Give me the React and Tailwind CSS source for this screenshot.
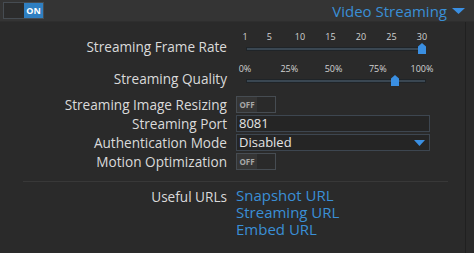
import React from "react";

const frameTicks = [1, 5, 10, 15, 20, 25, 30].map((v) => ({ label: String(v), pos: (v - 1) / 29 }));
const qualityTicks = ["0%", "25%", "50%", "75%", "100%"].map((l, i) => ({ label: l, pos: i / 4 }));

const Slider = ({ ticks, value }) => (
  <div className="w-[200px]">
    <div className="relative h-[12px] text-[9px] leading-[12px] text-[#d2d2d2]">
      {ticks.map((t) => (
        <span key={t.label} className="absolute top-0 -translate-x-1/2 whitespace-nowrap" style={{ left: 9 + t.pos * 177 }}>
          {t.label}
        </span>
      ))}
    </div>
    <div className="relative h-[12px]">
      <div className="absolute left-[10px] top-[4px] h-[4px] w-[180px] border border-[#1f2428] bg-[#3a4752]" />
      <svg className="absolute top-0" style={{ left: 9 + value * 177 - 4 }} width="8" height="11" viewBox="0 0 8 11">
        <path d="M0 3.5 L4 0 L8 3.5 V11 H0 Z" fill="#3a8fe2" />
      </svg>
    </div>
  </div>
);

const Toggle = ({ on }) =>
  on ? (
    <div className="flex h-[17px] w-[41px] border border-[#464c52]">
      <div className="w-[20px] bg-[#2c2c2c]" />
      <div className="flex flex-1 items-center justify-center bg-[#2f7fc1] text-[9px] font-bold text-white">ON</div>
    </div>
  ) : (
    <div className="flex h-[17px] w-[40px] border border-[#464c52]">
      <div className="flex w-[20px] items-center justify-center bg-[#353535] text-[8px] font-bold text-[#a8a8a8]">OFF</div>
      <div className="flex-1 bg-[#2a2a2a]" />
    </div>
  );

const Row = ({ label, children, className = "" }) => (
  <div className={`flex ${className}`}>
    <div className="w-[228px] shrink-0 pr-[1px] text-right text-[13.6px] leading-[17px] text-[#dadada]">{label}</div>
    <div className="ml-[8px]">{children}</div>
  </div>
);

const Triangle = ({ w, h, className = "" }) => (
  <svg className={className} width={w} height={h} viewBox={`0 0 ${w} ${h}`}>
    <path d={`M0 0 H${w} L${w / 2} ${h} Z`} fill="#3a8fe2" />
  </svg>
);

export default function App() {
  return (
    <div className="flex h-[253px] w-[474px] flex-col bg-[#2a2a2a] font-['Open_Sans',sans-serif]">
      <div className="flex h-[22px] shrink-0 items-center justify-between border-b border-[#2e2e2e] bg-[#343434] pl-[3px] pr-[9px]">
        <Toggle on />
        <div className="flex items-center gap-[5px]">
          <span className="text-[15px] leading-[20px] text-[#3a8fd6]">Video Streaming</span>
          <Triangle w={13} h={6} className="mt-[1px]" />
        </div>
      </div>

      <div className="flex flex-1">
        <div className="w-[465px] pt-[9px]">
          <Row label="Streaming Frame Rate" className="items-end">
            <Slider ticks={frameTicks} value={1} />
          </Row>
          <Row label="Streaming Quality" className="mt-[8px] items-end">
            <Slider ticks={qualityTicks} value={0.85} />
          </Row>

          <div className="mt-[9px] flex flex-col gap-[2px]">
            <Row label="Streaming Image Resizing">
              <Toggle />
            </Row>
            <Row label="Streaming Port">
              <div className="h-[17px] w-[194px] border border-[#3d4650] bg-[#252525] pl-[2px] text-[13px] leading-[15px] text-[#e4e4e4]">8081</div>
            </Row>
            <Row label="Authentication Mode">
              <div className="flex h-[17px] w-[194px] items-center justify-between border border-[#3d4650] bg-[#252525] pl-[2px] pr-[4px] text-[13px] leading-[15px] text-[#e4e4e4]">
                <span>Disabled</span>
                <Triangle w={11} h={6} />
              </div>
            </Row>
            <Row label="Motion Optimization">
              <Toggle />
            </Row>
          </div>

          <div className="ml-[23px] mt-[11px] h-[1px] w-[425px] bg-[#383838]" />

          <Row label="Useful URLs" className="mt-[6px]">
            <div className="-mt-[1px] flex flex-col text-[15px] leading-[17px] text-[#3a8fd6]">
              <span>Snapshot URL</span>
              <span>Streaming URL</span>
              <span>Embed URL</span>
            </div>
          </Row>
        </div>
        <div className="w-[1px] bg-[#202020]" />
        <div className="flex-1" />
      </div>
    </div>
  );
}
